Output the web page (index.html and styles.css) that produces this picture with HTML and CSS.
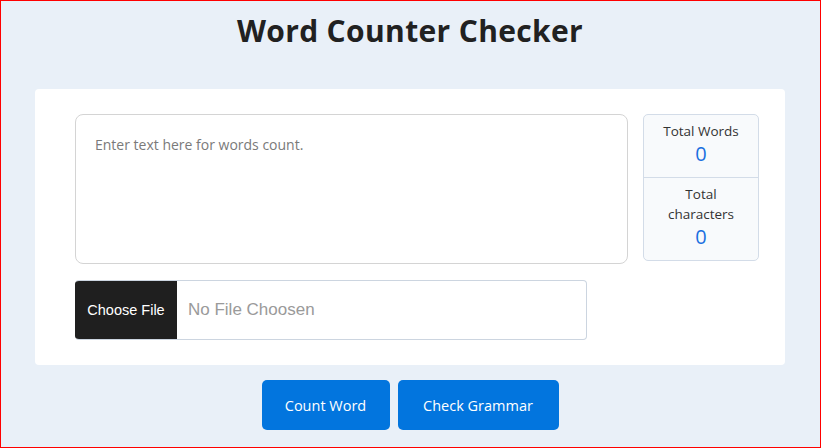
FILE: index.html
```html
<!DOCTYPE html>
<html lang="en">
<head>
<meta charset="utf-8">
<title>Word Counter Checker</title>
<link rel="stylesheet" href="styles.css">
</head>
<body>
<div class="page">
  <h1 class="title">Word Counter Checker</h1>
  <div class="card">
    <div class="top-row">
      <textarea class="text-input" placeholder="Enter text here for words count."></textarea>
      <div class="stats">
        <div class="stat">
          <div class="stat-label">Total Words</div>
          <div class="stat-value">0</div>
        </div>
        <div class="stat stat-second">
          <div class="stat-label">Total<br>characters</div>
          <div class="stat-value">0</div>
        </div>
      </div>
    </div>
    <div class="file-input">
      <span class="file-btn">Choose File</span>
      <span class="file-name">No File Choosen</span>
    </div>
  </div>
  <div class="actions">
    <button class="btn btn-count">Count Word</button>
    <button class="btn btn-grammar">Check Grammar</button>
  </div>
</div>
</body>
</html>
```

FILE: styles.css
```css
* { box-sizing: border-box; }
html, body { margin: 0; padding: 0; }
body {
  background: #e9f0f8;
  font-family: "Open Sans", "DejaVu Sans", sans-serif;
  color: #222;
}
.page {
  width: 821px;
  height: 448px;
  border: 1px solid #ff0000;
  padding-right: 1px;
  display: flex;
  flex-direction: column;
  align-items: center;
  overflow: hidden;
}
.title {
  margin: 10px 0 0;
  height: 40px;
  font-size: 30px;
  line-height: 40px;
  font-weight: 700;
  color: #212121;
  letter-spacing: 0.35px;
}
.card {
  margin-top: 38px;
  width: 750px;
  background: #fff;
  border-radius: 4px;
  padding: 25px 26px 25px 40px;
}
.top-row {
  display: flex;
  align-items: flex-start;
  gap: 15px;
}
.text-input {
  width: 553px;
  height: 150px;
  border: 1px solid #d4d4d4;
  border-radius: 8px;
  padding: 20px 19px;
  font-family: inherit;
  font-size: 14px;
  resize: none;
  outline: none;
  color: #333;
}
.text-input::placeholder { color: #7a7a7a; }
.stats {
  width: 116px;
  height: 147px;
  background: #f8fafc;
  border: 1px solid #d3dce8;
  border-radius: 5px;
  text-align: center;
}
.stat {
  height: 62px;
  padding-top: 6px;
}
.stat-second {
  height: auto;
  border-top: 1px solid #d3dce8;
  padding-top: 6px;
}
.stat-label {
  font-size: 13.5px;
  line-height: 20px;
  color: #333;
}
.stat-value {
  font-size: 20px;
  line-height: 26px;
  color: #1b6fe0;
}
.file-input {
  margin-top: 16px;
  width: 512px;
  height: 60px;
  display: flex;
  align-items: center;
  border: 1px solid #ccd5e0;
  border-left: none;
  border-radius: 4px;
  overflow: hidden;
}
.file-btn {
  width: 102px;
  height: calc(100% + 2px);
  margin: -1px 0;
  background: #1f1f1f;
  color: #fff;
  display: flex;
  align-items: center;
  justify-content: center;
  font-family: "Liberation Sans", Arial, sans-serif;
  font-size: 14.5px;
}
.file-name {
  padding-left: 11px;
  font-family: "Liberation Sans", Arial, sans-serif;
  font-size: 17px;
  color: #9a9a9a;
}
.actions {
  margin-top: 15px;
  display: flex;
  gap: 8px;
}
.btn {
  height: 50px;
  border: none;
  border-radius: 5px;
  background: #0275de;
  color: #fff;
  font-family: inherit;
  font-size: 14.5px;
  cursor: pointer;
}
.btn-count { width: 128px; }
.btn-grammar { width: 161px; }
```
